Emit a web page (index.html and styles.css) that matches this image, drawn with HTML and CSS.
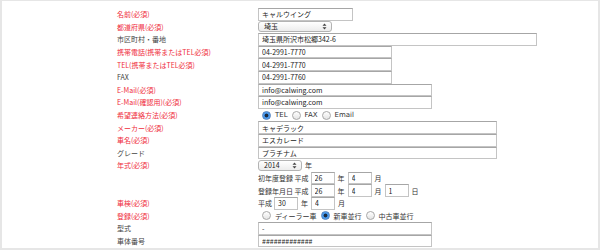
FILE: index.html
```html
<!DOCTYPE html>
<html lang="ja">
<head>
	<meta charset="UTF-8">
	<title>お問い合わせ</title>
	<link rel="stylesheet" href="styles.css">
</head>
<body>
	<div class="frame">
		<div class="form">
			<div class="label req">名前(必須)</div>
			<div class="field"><input class="text w-name" value="キャルウイング"></div>

			<div class="label req">都道府県(必須)</div>
			<div class="field">
				<span class="sel w-pref">
					<select><option>埼玉</option></select>
					<svg class="arw" width="5" height="7" viewBox="0 0 5 7"><path d="M2.5 0.5 L4.5 2.8 H0.5 Z M2.5 6.5 L4.5 4.2 H0.5 Z" fill="#444"/></svg>
				</span>
			</div>

			<div class="label">市区町村・番地</div>
			<div class="field"><input class="text w-addr" value="埼玉県所沢市松郷342-6"></div>

			<div class="label req">携帯電話(携帯またはTEL必須)</div>
			<div class="field"><input class="text w-tel" value="04-2991-7770"></div>

			<div class="label req">TEL(携帯またはTEL必須)</div>
			<div class="field"><input class="text w-tel" value="04-2991-7770"></div>

			<div class="label">FAX</div>
			<div class="field"><input class="text w-tel" value="04-2991-7760"></div>

			<div class="label req">E-Mail(必須)</div>
			<div class="field"><input class="text w-mail" value="info@calwing.com"></div>

			<div class="label req">E-Mail(確認用)(必須)</div>
			<div class="field"><input class="text w-mail" value="info@calwing.com"></div>

			<div class="label req">希望連絡方法(必須)</div>
			<div class="field radios">
				<label><input type="radio" name="contact" checked>TEL</label>
				<label><input type="radio" name="contact">FAX</label>
				<label><input type="radio" name="contact">Email</label>
			</div>

			<div class="label req">メーカー(必須)</div>
			<div class="field"><input class="text w-car" value="キャデラック"></div>

			<div class="label req">車名(必須)</div>
			<div class="field"><input class="text w-car" value="エスカレード"></div>

			<div class="label">グレード</div>
			<div class="field"><input class="text w-car" value="プラチナム"></div>

			<div class="label req">年式(必須)</div>
			<div class="field">
				<span class="sel w-year">
					<select><option>2014</option></select>
					<svg class="arw" width="5" height="7" viewBox="0 0 5 7"><path d="M2.5 0.5 L4.5 2.8 H0.5 Z M2.5 6.5 L4.5 4.2 H0.5 Z" fill="#444"/></svg>
				</span>
				<span class="unit">年</span>
			</div>

			<div class="label"></div>
			<div class="field">
				初年度登録 平成<input class="text w-num" value="26"><span class="unit">年</span><input class="text w-num" value="4"><span class="unit">月</span>
			</div>

			<div class="label"></div>
			<div class="field">
				登録年月日 平成<input class="text w-num" value="26"><span class="unit">年</span><input class="text w-num" value="4"><span class="unit">月</span><input class="text w-num" value="1"><span class="unit">日</span>
			</div>

			<div class="label req">車検(必須)</div>
			<div class="field">
				平成<input class="text w-num" value="30"><span class="unit">年</span><input class="text w-num" value="4"><span class="unit">月</span>
			</div>

			<div class="label req">登録(必須)</div>
			<div class="field radios">
				<label><input type="radio" name="reg">ディーラー車</label>
				<label><input type="radio" name="reg" checked>新車並行</label>
				<label><input type="radio" name="reg">中古車並行</label>
			</div>

			<div class="label">型式</div>
			<div class="field"><input class="text w-mail" value="-"></div>

			<div class="label">車体番号</div>
			<div class="field"><input class="text w-mail" value="#############"></div>
		</div>
	</div>
</body>
</html>
```

FILE: styles.css
```css
body {
	margin: 0;
	font-family: "Noto Sans CJK JP", "Noto Sans", sans-serif;
	font-size: 7px;
	color: #333;
}
.frame {
	width: 600px;
	height: 250px;
	box-sizing: border-box;
	border: 2px solid #e6e6e6;
	border-top-width: 1px;
	padding: 7px 0 0 115px;
}
.form {
	display: grid;
	grid-template-columns: 141px auto;
	grid-auto-rows: 12.6px;
	align-items: center;
}
.label {
	color: #444;
	white-space: nowrap;
}
.req {
	color: #ef2d3c;
}
.field {
	display: flex;
	align-items: center;
	height: 100%;
	white-space: nowrap;
	color: #333;
}
.text {
	box-sizing: border-box;
	height: 12.6px;
	margin: 0;
	padding: 0 3px;
	border: 1px solid #c4c4c4;
	border-top-color: #a6a6a6;
	border-radius: 0;
	background: #fff;
	font: inherit;
	color: #222;
}
.w-name { width: 95px; }
.w-addr { width: 279px; }
.w-tel { width: 134px; }
.w-mail { width: 174px; }
.w-car { width: 239px; }
.w-num {
	width: 24px;
	margin-left: 2px;
}
.unit {
	margin: 0 1px 0 3px;
}
.sel {
	position: relative;
	display: inline-block;
	height: 11px;
}
.sel select {
	appearance: none;
	-webkit-appearance: none;
	box-sizing: border-box;
	width: 100%;
	height: 11px;
	margin: 0;
	padding: 0 0 0 5px;
	border: 1px solid #b3b3b3;
	border-radius: 3px;
	background: linear-gradient(#ffffff, #ececec);
	font: inherit;
	color: #222;
	line-height: 9px;
}
.sel .arw {
	position: absolute;
	right: 5px;
	top: 2px;
}
.w-pref { width: 74px; }
.w-year { width: 44px; }
.radios {
	font-family: "DejaVu Sans", "Noto Sans CJK JP", sans-serif;
}
.radios label {
	display: flex;
	align-items: center;
}
.radios input {
	appearance: none;
	-webkit-appearance: none;
	box-sizing: border-box;
	width: 9px;
	height: 9px;
	margin: 0 4px 0 4px;
	border: 1px solid #a8a8a8;
	border-radius: 50%;
	background: linear-gradient(#ffffff, #e4e4e4);
}
.radios input:checked {
	border-color: #4d7fbf;
	background: radial-gradient(circle, #1c2b3e 0 1.6px, #3d8fe6 2.2px, #86c2f5);
}
```
